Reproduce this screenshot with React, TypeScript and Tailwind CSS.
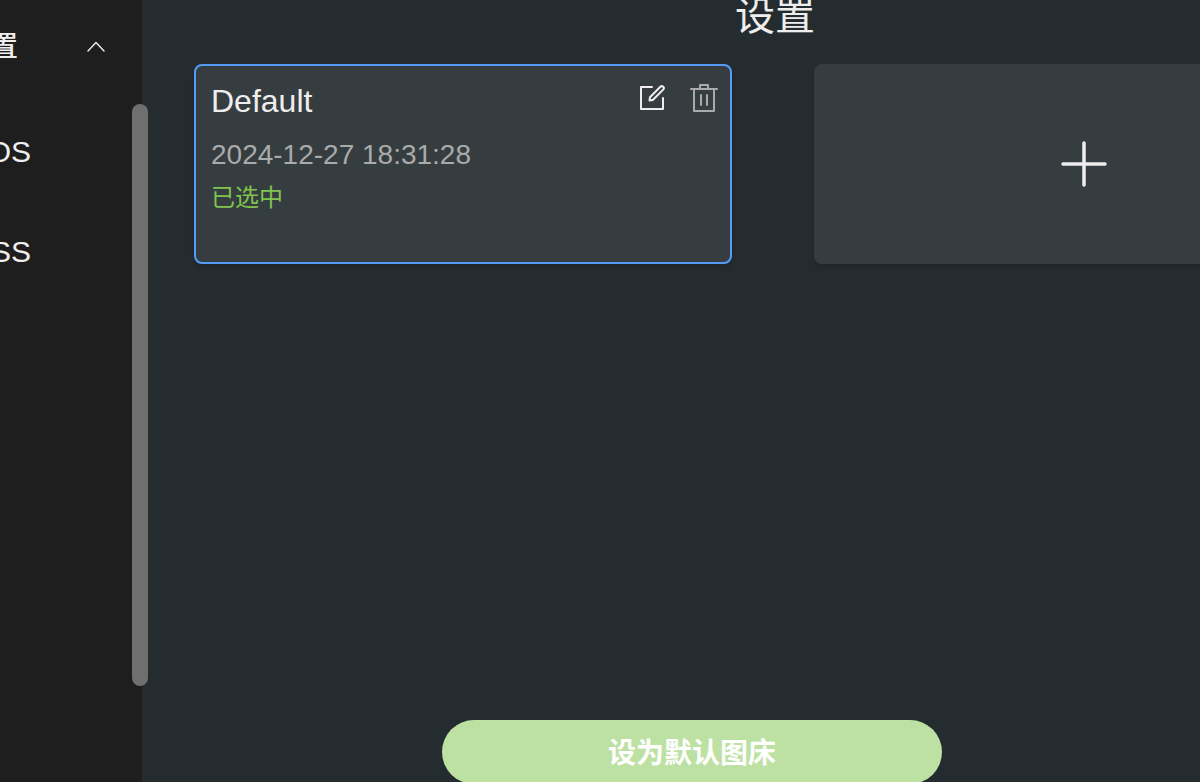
import { useState } from "react";

type IconProps = { paths: string[]; className: string };

function Icon({ paths, className }: IconProps) {
  return (
    <svg viewBox="0 0 1024 1024" fill="currentColor" className={className} aria-hidden="true">
      {paths.map((d) => (
        <path key={d} d={d} />
      ))}
    </svg>
  );
}

const editPaths = [
  "M832 512a32 32 0 1 1 64 0v352a32 32 0 0 1-32 32H160a32 32 0 0 1-32-32V160a32 32 0 0 1 32-32h352a32 32 0 0 1 0 64H192v640h640z",
  "m469.952 554.24 52.8-7.552L847.104 222.4a32 32 0 1 0-45.248-45.248L477.44 501.44l-7.552 52.8zm422.4-422.4a96 96 0 0 1 0 135.808l-331.84 331.84a32 32 0 0 1-18.112 9.088L436.8 623.68a32 32 0 0 1-36.224-36.224l15.104-105.6a32 32 0 0 1 9.024-18.112l331.904-331.84a96 96 0 0 1 135.744 0z",
];
const deletePaths = [
  "M160 256H96a32 32 0 0 1 0-64h256V95.936a32 32 0 0 1 32-32h256a32 32 0 0 1 32 32V192h256a32 32 0 1 1 0 64h-64v672a32 32 0 0 1-32 32H192a32 32 0 0 1-32-32zm448-64v-64H416v64zM224 896h576V256H224zm192-128a32 32 0 0 1-32-32V416a32 32 0 0 1 64 0v320a32 32 0 0 1-32 32m192 0a32 32 0 0 1-32-32V416a32 32 0 0 1 64 0v320a32 32 0 0 1-32 32",
];
const plusPaths = [
  "M480 480V128a32 32 0 0 1 64 0v352h352a32 32 0 1 1 0 64H544v352a32 32 0 1 1-64 0V544H128a32 32 0 0 1 0-64z",
];
const arrowUpPaths = [
  "m488.832 344.32-339.84 356.672a32 32 0 0 0 0 44.16l.384.384a29.44 29.44 0 0 0 42.688 0l320-335.872 319.872 335.872a29.44 29.44 0 0 0 42.688 0l.384-.384a32 32 0 0 0 0-44.16L535.168 344.32a32 32 0 0 0-46.336 0",
];

function Sidebar() {
  const [open, setOpen] = useState(true);
  return (
    <nav className="relative w-[142px] shrink-0 bg-[#1e1e1e] leading-10 text-[#eeeeee]">
      <button
        type="button"
        aria-expanded={open}
        onClick={() => setOpen(!open)}
        className="flex h-[100px] w-full items-center justify-between pr-[34px] pb-2 text-[28px]"
      >
        <span className="flex w-[18px] justify-end pt-0.5 font-medium">置</span>
        <Icon paths={arrowUpPaths} className={open ? "size-6" : "size-6 rotate-180"} />
      </button>
      {open && (
        <ul className="pt-0.5 text-[30px]">
          {["OS", "SS"].map((label) => (
            <li key={label}>
              <a href={"#" + label} className="flex h-[100px] items-center">
                <span className="flex w-[31px] justify-end">{label}</span>
              </a>
            </li>
          ))}
        </ul>
      )}
      <div className="absolute top-[104px] -right-1.5 h-[582px] w-4 rounded-full bg-[#6f6f6f]" />
    </nav>
  );
}

export default function App() {
  return (
    <div className="flex h-screen overflow-hidden bg-[#242c2f] font-['Liberation_Sans','Noto_Sans_CJK_SC',sans-serif]">
      <Sidebar />
      <main className="flex min-w-0 flex-1 flex-col">
        <h1 className="-mt-4 h-20 w-[1266px] text-center text-[40px] leading-[64px] text-[#eeeeee]">
          设置
        </h1>
        <section className="flex gap-[82px] pl-[52px]">
          <article className="flex h-[200px] w-[538px] shrink-0 items-start justify-between rounded-lg border-2 border-[#549bf8] bg-[#363d40] py-4 pr-2.5 pl-[15px] shadow-md">
            <div>
              <h2 className="text-[32px] leading-[38px] text-[#eeeeee]">Default</h2>
              <p className="mt-[15px] text-[28px] leading-10 text-[#aaaaaa]">2024-12-27 18:31:28</p>
              <p className="mt-[3px] text-[24px] leading-10 text-[#80c44f]">已选中</p>
            </div>
            <div className="flex gap-5">
              <button type="button" aria-label="编辑" className="text-[#eeeeee]">
                <Icon paths={editPaths} className="size-8" />
              </button>
              <button type="button" aria-label="删除" className="text-[#aaaaaa]">
                <Icon paths={deletePaths} className="size-8" />
              </button>
            </div>
          </article>
          <button
            type="button"
            aria-label="添加"
            className="flex h-[200px] w-[540px] shrink-0 items-center justify-center rounded-lg bg-[#363d40] text-[#eeeeee] shadow-md"
          >
            <Icon paths={plusPaths} className="size-14" />
          </button>
        </section>
        <footer className="mt-auto -mb-0.5 flex w-[1100px] justify-center">
          <button
            type="button"
            className="h-16 w-[500px] rounded-full bg-[#bde1a3] pt-1 text-[28px] leading-10 font-bold text-white"
          >
            设为默认图床
          </button>
        </footer>
      </main>
    </div>
  );
}
